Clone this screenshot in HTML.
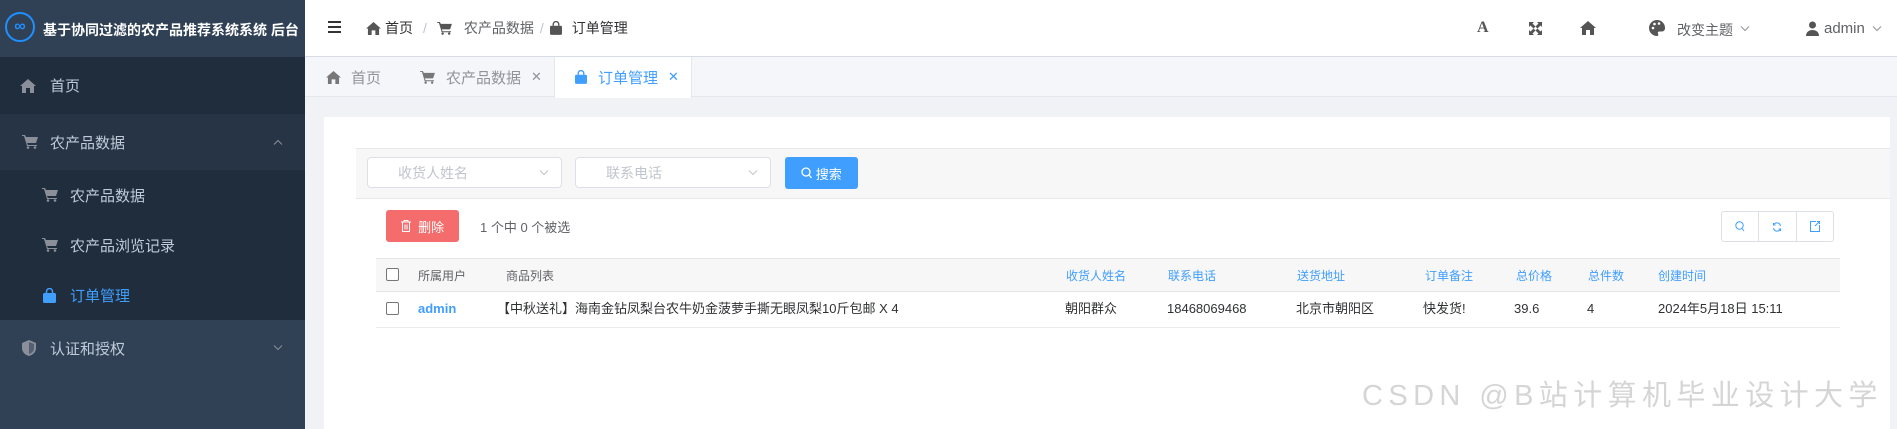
<!DOCTYPE html>
<html><head><meta charset="utf-8"><style>
*{box-sizing:border-box;margin:0;padding:0}
body{width:1897px;height:429px;overflow:hidden;font-family:"Liberation Sans","Noto Sans CJK SC",sans-serif;background:#f0f2f5;position:relative;color:#606266}
.a{position:absolute}
svg{display:block}
.side{left:0;top:0;width:305px;height:429px;background:#304156}
.mi{position:absolute;left:0;width:305px;font-size:15px;color:#bfcbd9;display:flex;align-items:center}
.hdr{left:305px;top:0;width:1592px;height:57px;background:#fff;border-bottom:1px solid #d8dce5}
.tabs{left:305px;top:57px;width:1592px;height:40px;background:#f4f6fa;border-bottom:1px solid #e4e7ed}
.tab{position:absolute;top:0;height:40px;display:flex;align-items:center;font-size:15px;color:#909399}
.card{left:324px;top:117px;width:1566px;height:312px;background:#fff}
.th{position:absolute;top:268px;height:16px;line-height:16px;font-size:12px;color:#606266}
.td{position:absolute;top:300px;height:18px;line-height:18px;font-size:13px;color:#303133}
.blue{color:#409eff}
.inp{position:absolute;top:157px;height:31px;border:1px solid #dcdfe6;border-radius:4px;background:#fff;font-size:14px;color:#c0c4cc;display:flex;align-items:center}
.cb{position:absolute;width:13px;height:13px;border:1px solid #767676;border-radius:2px;background:#fff}
.chev{position:absolute}
</style></head><body>
<div class="a side"></div>
<div class="a" style="left:5px;top:12px;width:30px;height:30px;border:2px solid #1e90ff;border-radius:50%;display:flex;align-items:center;justify-content:center;color:#1e90ff;font-weight:bold;font-size:16px">∞</div>
<div class="a" style="left:43px;top:20px;font-size:14px;font-weight:bold;color:#fff;white-space:nowrap">基于协同过滤的农产品推荐系统系统 后台</div>
<div class="a" style="left:0;top:57px;width:305px;height:57px;background:#1f2d3d"></div>
<div class="mi" style="top:57px;height:57px;padding-left:20px"><svg width="16" height="14" viewBox="0 0 16 14"><path d="M8 0L0 7h2v7h4V9h4v5h4V7h2z" fill="#8a8f99"/></svg><span style="margin-left:14px">首页</span></div>
<div class="a" style="left:0;top:114px;width:305px;height:56px;background:#263445"></div>
<div class="mi" style="top:114px;height:56px;padding-left:22px"><svg width="16" height="14" viewBox="0 0 16 14"><path d="M0 0h3l1 2h12l-2 6H5l1 2h9v1H5L2 1H0z" fill="#8a8f99"/><circle cx="6" cy="12.5" r="1.3" fill="#8a8f99"/><circle cx="13" cy="12.5" r="1.3" fill="#8a8f99"/></svg><span style="margin-left:12px">农产品数据</span><svg class="chev" style="right:22px" width="10" height="6" viewBox="0 0 10 6"><path d="M1 5.5L5 1.5 9 5.5" stroke="#8a8f99" fill="none"/></svg></div>
<div class="a" style="left:0;top:170px;width:305px;height:150px;background:#1f2d3d"></div>
<div class="mi" style="top:170px;height:50px;padding-left:42px"><svg width="16" height="14" viewBox="0 0 16 14"><path d="M0 0h3l1 2h12l-2 6H5l1 2h9v1H5L2 1H0z" fill="#8a8f99"/><circle cx="6" cy="12.5" r="1.3" fill="#8a8f99"/><circle cx="13" cy="12.5" r="1.3" fill="#8a8f99"/></svg><span style="margin-left:12px">农产品数据</span></div>
<div class="mi" style="top:220px;height:50px;padding-left:42px"><svg width="16" height="14" viewBox="0 0 16 14"><path d="M0 0h3l1 2h12l-2 6H5l1 2h9v1H5L2 1H0z" fill="#8a8f99"/><circle cx="6" cy="12.5" r="1.3" fill="#8a8f99"/><circle cx="13" cy="12.5" r="1.3" fill="#8a8f99"/></svg><span style="margin-left:12px">农产品浏览记录</span></div>
<div class="mi" style="top:270px;height:50px;padding-left:43px;color:#409eff"><svg width="13" height="15" viewBox="0 0 13 15"><path d="M3.5 5V3.5a3 3 0 0 1 6 0V5" stroke="#409eff" stroke-width="1.5" fill="none"/><rect x="0" y="5" width="13" height="10" rx="1.5" fill="#409eff"/></svg><span style="margin-left:14px">订单管理</span></div>
<div class="mi" style="top:320px;height:56px;padding-left:22px"><svg width="14" height="16" viewBox="0 0 14 16"><path d="M7 0L0 3v5c0 4 3 7 7 8 4-1 7-4 7-8V3z" fill="#8a8f99"/><path d="M7 2v12c3-1 5-3 5-6V4z" fill="#304156" opacity=".6"/></svg><span style="margin-left:14px">认证和授权</span><svg class="chev" style="right:22px" width="10" height="6" viewBox="0 0 10 6"><path d="M1 0.5L5 4.5 9 0.5" stroke="#8a8f99" fill="none"/></svg></div>

<div class="a hdr"></div>
<div class="a" style="left:328px;top:21px;width:13px;height:2px;background:#333;box-shadow:0 5px 0 #333,0 10px 0 #333"></div>
<div class="a" style="left:366px;top:18px;display:flex;align-items:center;font-size:14px;color:#303133">
<svg width="15" height="13" viewBox="0 0 16 14"><path d="M8 0L0 7h2v7h4V9h4v5h4V7h2z" fill="#555"/></svg><span style="margin-left:4px">首页</span><span style="margin:0 10px;color:#c0c4cc">/</span>
<svg width="15" height="13" viewBox="0 0 16 14"><path d="M0 0h3l1 2h12l-2 6H5l1 2h9v1H5L2 1H0z" fill="#555"/><circle cx="6" cy="12.5" r="1.3" fill="#555"/><circle cx="13" cy="12.5" r="1.3" fill="#555"/></svg><span style="margin-left:12px;color:#606266">农产品数据</span><span style="margin:0 6px;color:#c0c4cc">/</span>
<svg width="12" height="14" viewBox="0 0 13 15"><path d="M3.5 5V3.5a3 3 0 0 1 6 0V5" stroke="#555" stroke-width="1.5" fill="none"/><rect x="0" y="5" width="13" height="10" rx="1.5" fill="#555"/></svg><span style="margin-left:10px">订单管理</span></div>
<div class="a" style="left:1477px;top:19px;font-size:16px;font-weight:bold;color:#555;font-family:'Liberation Serif',serif">A</div>
<svg class="a" style="left:1529px;top:22px" width="13" height="13" viewBox="0 0 13 13"><path d="M0 0h5L3.5 1.5 6.5 4.5 4.5 6.5 1.5 3.5 0 5zM13 0v5l-1.5-1.5-3 3-2-2 3-3L8 0zM0 13V8l1.5 1.5 3-3 2 2-3 3L5 13zM13 13H8l1.5-1.5-3-3 2-2 3 3L13 8z" fill="#555"/></svg>
<svg class="a" style="left:1580px;top:21px" width="16" height="14" viewBox="0 0 16 14"><path d="M8 0L0 7h2v7h4V9h4v5h4V7h2z" fill="#555"/></svg>
<svg class="a" style="left:1649px;top:20px" width="16" height="16" viewBox="0 0 16 16"><path d="M8 0a8 8 0 0 0 0 16c1.5 0 1.5-1.5 1-2.5s0-2 1.5-2H13a3 3 0 0 0 3-3A8 8 0 0 0 8 0z" fill="#555"/><circle cx="4" cy="8" r="1.3" fill="#fff"/><circle cx="5.5" cy="4" r="1.3" fill="#fff"/><circle cx="10" cy="3.5" r="1.3" fill="#fff"/></svg>
<div class="a" style="left:1677px;top:20px;font-size:14px;color:#606266">改变主题</div>
<svg class="a" style="left:1740px;top:26px" width="10" height="6" viewBox="0 0 10 6"><path d="M1 0.5L5 4.5 9 0.5" stroke="#909399" fill="none"/></svg>
<svg class="a" style="left:1806px;top:21px" width="13" height="15" viewBox="0 0 13 15"><circle cx="6.5" cy="4" r="3.5" fill="#555"/><path d="M0 15c0-4 3-6 6.5-6S13 11 13 15z" fill="#555"/></svg>
<div class="a" style="left:1824px;top:20px;font-size:15px;color:#606266">admin</div>
<svg class="a" style="left:1872px;top:26px" width="10" height="6" viewBox="0 0 10 6"><path d="M1 0.5L5 4.5 9 0.5" stroke="#909399" fill="none"/></svg>

<div class="a tabs"></div>
<div class="tab" style="left:326px;top:57px"><svg width="15" height="13" viewBox="0 0 16 14"><path d="M8 0L0 7h2v7h4V9h4v5h4V7h2z" fill="#777"/></svg><span style="margin-left:10px">首页</span></div>
<div class="tab" style="left:420px;top:57px"><svg width="15" height="13" viewBox="0 0 16 14"><path d="M0 0h3l1 2h12l-2 6H5l1 2h9v1H5L2 1H0z" fill="#777"/><circle cx="6" cy="12.5" r="1.3" fill="#777"/><circle cx="13" cy="12.5" r="1.3" fill="#777"/></svg><span style="margin-left:11px">农产品数据</span><span style="margin-left:10px;font-size:13px">✕</span></div>
<div class="a" style="left:554px;top:57px;width:138px;height:41px;background:#fff;border-left:1px solid #e4e7ed;border-right:1px solid #e4e7ed"></div>
<div class="tab" style="left:575px;top:57px;color:#409eff"><svg width="12" height="14" viewBox="0 0 13 15"><path d="M3.5 5V3.5a3 3 0 0 1 6 0V5" stroke="#409eff" stroke-width="1.5" fill="none"/><rect x="0" y="5" width="13" height="10" rx="1.5" fill="#409eff"/></svg><span style="margin-left:11px">订单管理</span><span style="margin-left:10px;font-size:13px">✕</span></div>

<div class="a card"></div>
<div class="a" style="left:356px;top:148px;width:1534px;height:51px;background:#f7f7f7;border-top:1px solid #e8e8e8;border-bottom:1px solid #e8e8e8"></div>
<div class="inp" style="left:367px;width:195px;padding-left:30px">收货人姓名<svg class="chev" style="right:12px" width="10" height="6" viewBox="0 0 10 6"><path d="M1 0.5L5 4.5 9 0.5" stroke="#c0c4cc" fill="none"/></svg></div>
<div class="inp" style="left:575px;width:196px;padding-left:30px">联系电话<svg class="chev" style="right:12px" width="10" height="6" viewBox="0 0 10 6"><path d="M1 0.5L5 4.5 9 0.5" stroke="#c0c4cc" fill="none"/></svg></div>
<div class="a" style="left:785px;top:157px;width:73px;height:32px;background:#409eff;border-radius:3px;color:#fff;font-size:13px;display:flex;align-items:center;justify-content:center"><svg width="11" height="12" viewBox="0 0 11 12"><circle cx="5" cy="5" r="4" stroke="#fff" stroke-width="1.3" fill="none"/><path d="M8 8l2.5 3" stroke="#fff" stroke-width="1.3"/></svg>&nbsp;搜索</div>
<div class="a" style="left:386px;top:210px;width:73px;height:32px;background:#f56c6c;border-radius:3px;color:#fff;font-size:13px;display:flex;align-items:center;justify-content:center"><svg width="10" height="12" viewBox="0 0 10 12"><path d="M0 2h10M3 2V0.5h4V2M1.5 2v9.5h7V2M4 4.5v5M6 4.5v5" stroke="#fff" fill="none"/></svg>&nbsp;&nbsp;删除</div>
<div class="a" style="left:480px;top:217px;font-size:13px;color:#606266">1 个中 0 个被选</div>
<div class="a" style="left:1721px;top:211px;width:113px;height:31px;border:1px solid #dcdfe6;border-radius:3px;display:flex">
<div style="flex:1;border-right:1px solid #dcdfe6;display:flex;align-items:center;justify-content:center"><svg width="10" height="11" viewBox="0 0 10 11"><circle cx="4.5" cy="4.5" r="3.7" stroke="#409eff" fill="none"/><path d="M7 7.5l2 2.5" stroke="#409eff"/></svg></div>
<div style="flex:1;border-right:1px solid #dcdfe6;display:flex;align-items:center;justify-content:center"><svg width="10" height="10" viewBox="0 0 10 10"><path d="M8.5 4A3.7 3.7 0 0 0 1.5 3M1.5 6a3.7 3.7 0 0 0 7 1M1.5 1v2h2M8.5 9V7h-2" stroke="#409eff" fill="none"/></svg></div>
<div style="flex:1;display:flex;align-items:center;justify-content:center"><svg width="10" height="11" viewBox="0 0 10 11"><path d="M6 .5H.5v10h9V4M7 .5h2.5V3M5 5l4.5-4.5" stroke="#409eff" fill="none"/></svg></div></div>
<div class="a" style="left:376px;top:258px;width:1464px;height:34px;background:#f7f7f7;border-top:1px solid #e6e6e6;border-bottom:1px solid #e6e6e6"></div>
<div class="cb" style="left:386px;top:268px"></div>
<div class="th" style="left:418px">所属用户</div>
<div class="th" style="left:506px">商品列表</div>
<div class="th blue" style="left:1066px">收货人姓名</div>
<div class="th blue" style="left:1168px">联系电话</div>
<div class="th blue" style="left:1297px">送货地址</div>
<div class="th blue" style="left:1425px">订单备注</div>
<div class="th blue" style="left:1516px">总价格</div>
<div class="th blue" style="left:1588px">总件数</div>
<div class="th blue" style="left:1658px">创建时间</div>
<div class="a" style="left:376px;top:327px;width:1464px;height:1px;background:#ececec"></div>
<div class="cb" style="left:386px;top:302px"></div>
<div class="td blue" style="left:418px;font-weight:bold">admin</div>
<div class="td" style="left:497px">【中秋送礼】海南金钻凤梨台农牛奶金菠萝手撕无眼凤梨10斤包邮 X 4</div>
<div class="td" style="left:1065px">朝阳群众</div>
<div class="td" style="left:1167px">18468069468</div>
<div class="td" style="left:1296px">北京市朝阳区</div>
<div class="td" style="left:1423px">快发货!</div>
<div class="td" style="left:1514px">39.6</div>
<div class="td" style="left:1587px">4</div>
<div class="td" style="left:1658px">2024年5月18日 15:11</div>
<div class="a" style="left:1362px;top:372px;font-size:29px;letter-spacing:5.4px;color:rgba(150,150,150,.4);white-space:nowrap">CSDN @B站计算机毕业设计大学</div>
</body></html>
